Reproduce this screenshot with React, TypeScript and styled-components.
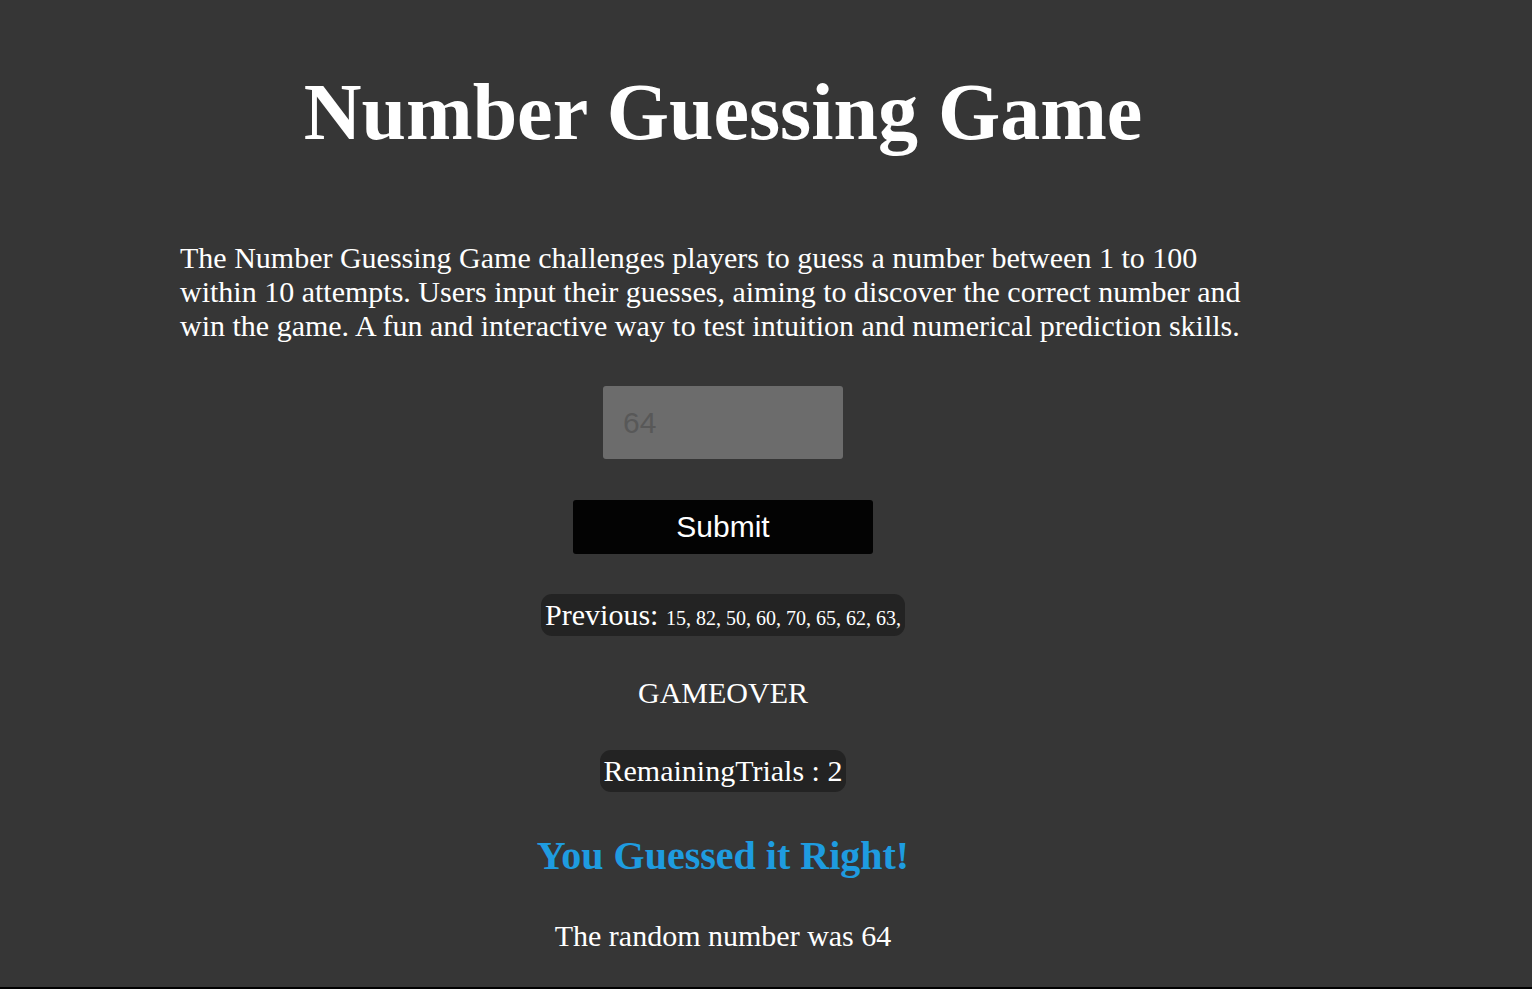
import React from "react";
import styled, { createGlobalStyle } from "styled-components";

const GlobalStyle = createGlobalStyle`
  html, body {
    margin: 0;
    padding: 0;
    background: #000000;
  }
  * { box-sizing: border-box; }
`;

const Page = styled.div`
  height: 987px;
  background: #363636;
  padding: 66px 266px 0 180px;
  font-family: "Liberation Serif", "Times New Roman", serif;
  color: #ffffff;
  overflow: hidden;
`;

const Column = styled.main`
  width: 1086px;
  display: flex;
  flex-direction: column;
  align-items: center;
`;

const Title = styled.h1`
  margin: 0;
  font-size: 80px;
  line-height: 92px;
  font-weight: 700;
  text-align: center;
`;

const Description = styled.p`
  margin: 83px 0 0;
  align-self: stretch;
  font-size: 30px;
  line-height: 34px;
  text-align: left;
`;

const GuessInput = styled.input`
  margin-top: 43px;
  width: 240px;
  height: 73px;
  border: none;
  border-radius: 3px;
  background: #6c6c6c;
  padding: 0 20px;
  font-family: "Liberation Sans", Arial, sans-serif;
  font-size: 30px;
  color: #585858;
  outline: none;
  &::placeholder {
    color: #585858;
  }
`;

const SubmitButton = styled.button`
  margin-top: 41px;
  width: 300px;
  height: 54px;
  border: none;
  border-radius: 3px;
  background: #030303;
  color: #ffffff;
  font-family: "Liberation Sans", Arial, sans-serif;
  font-size: 30px;
  cursor: pointer;
`;

const Pill = styled.p<{ $top: number }>`
  margin: ${(p) => p.$top}px 0 0;
  display: inline-block;
  padding: 4px 4px;
  border-radius: 11px;
  background: #232323;
  font-size: 30px;
  line-height: 34px;
  white-space: nowrap;
`;

const SmallNumbers = styled.span`
  font-size: 20px;
  line-height: 20px;
`;

const Status = styled.p<{ $top: number }>`
  margin: ${(p) => p.$top}px 0 0;
  font-size: 30px;
  line-height: 34px;
`;

const Result = styled.h2`
  margin: 41px 0 0;
  font-size: 40px;
  line-height: 46px;
  font-weight: 700;
  color: #1e9ce0;
`;

export default function App() {
  const previous = [15, 82, 50, 60, 70, 65, 62, 63];
  return (
    <>
      <GlobalStyle />
      <Page>
        <Column>
          <Title>Number Guessing Game</Title>
          <Description>
            The Number Guessing Game challenges players to guess a number between 1 to 100
            within 10 attempts. Users input their guesses, aiming to discover the correct number and
            win the game. A fun and interactive way to test intuition and numerical prediction skills.
          </Description>
          <GuessInput type="number" placeholder="64" />
          <SubmitButton type="button">Submit</SubmitButton>
          <Pill $top={40}>
            Previous: <SmallNumbers>{previous.map((n) => `${n}, `).join("")}</SmallNumbers>
          </Pill>
          <Status $top={40}>GAMEOVER</Status>
          <Pill $top={40}>RemainingTrials : 2</Pill>
          <Result>You Guessed it Right!</Result>
          <Status $top={40}>The random number was 64</Status>
        </Column>
      </Page>
    </>
  );
}
